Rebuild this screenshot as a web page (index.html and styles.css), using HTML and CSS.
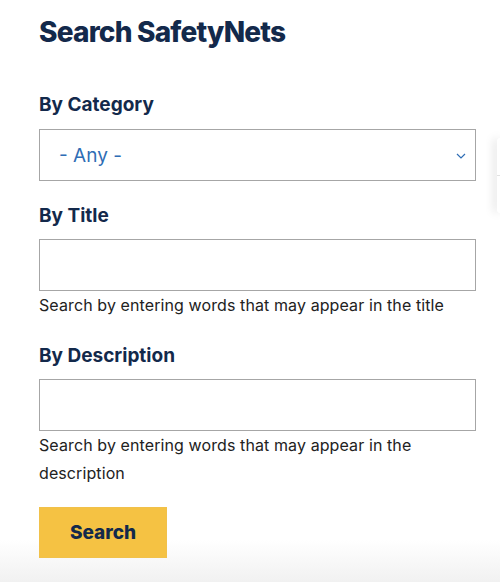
FILE: index.html
```html
<!DOCTYPE html>
<html lang="en">
<head>
<meta charset="utf-8">
<title>Search SafetyNets</title>
<link rel="stylesheet" href="styles.css">
</head>
<body>
<main class="page">
  <h1 class="title">Search SafetyNets</h1>
  <form class="search-form">
    <div class="field field-category">
      <label class="label" for="cat">By Category</label>
      <div class="select">
        <span class="select-value">- Any -</span>
        <svg class="chevron" width="10" height="6" viewBox="0 0 10 6"><path d="M1 1 L5 5 L9 1" fill="none" stroke="#2f6db5" stroke-width="1.2"/></svg>
      </div>
    </div>
    <div class="field field-title">
      <label class="label" for="title">By Title</label>
      <input class="input" id="title" type="text">
      <p class="help">Search by entering words that may appear in the title</p>
    </div>
    <div class="field field-desc">
      <label class="label" for="desc">By Description</label>
      <input class="input" id="desc" type="text">
      <p class="help help-wrap">Search by entering words that may appear in the description</p>
    </div>
    <button class="btn" type="button">Search</button>
  </form>
  <div class="popup"><div class="popup-top"></div><div class="popup-bottom"></div></div>
</main>
</body>
</html>
```

FILE: styles.css
```css
html, body {
  margin: 0;
  padding: 0;
}
body {
  min-height: 582px;
  background: linear-gradient(to bottom, #ffffff 0px, #ffffff 540px, #f1f1f1 582px);
  font-family: "Inter", "Liberation Sans", sans-serif;
  overflow: hidden;
}
.page {
  padding: 15px 0 0 39px;
  position: relative;
  min-height: 567px;
}
.title {
  margin: 0;
  font-size: 28px;
  line-height: 34px;
  font-weight: 800;
  letter-spacing: -0.8px;
  color: #13294b;
}
.search-form {
  display: flex;
  flex-direction: column;
  width: 437px;
}
.field {
  display: flex;
  flex-direction: column;
}
.field-category { margin-top: 44px; }
.field-title { margin-top: 23px; }
.field-desc { margin-top: 25px; }
.label {
  font-size: 19px;
  line-height: 24px;
  font-weight: 700;
  color: #13294b;
  margin-bottom: 12px;
}
.field-title .label, .field-desc .label { margin-bottom: 11px; }
.select {
  box-sizing: border-box;
  height: 52px;
  border: 1px solid #a6a6a6;
  display: flex;
  align-items: center;
  justify-content: space-between;
  padding: 0 9px 0 19px;
  background: #fff;
}
.select-value {
  font-size: 19px;
  color: #2f6db5;
}
.chevron { margin-top: 2px; }
.input {
  box-sizing: border-box;
  height: 52px;
  width: 100%;
  border: 1px solid #a6a6a6;
  margin: 0;
  background: #fff;
  font: inherit;
}
.help {
  margin: 0;
  font-size: 16px;
  line-height: 28px;
  letter-spacing: 0.1px;
  color: #222;
}
.help-wrap { max-width: 400px; }
.btn {
  margin-top: 20px;
  align-self: flex-start;
  width: 128px;
  height: 51px;
  border: 1px solid #f1c14a;
  background: #f5c243;
  color: #13294b;
  font-family: "Inter", "Liberation Sans", sans-serif;
  font-weight: 800;
  font-size: 19px;
  padding: 0;
}
.popup {
  position: absolute;
  left: 497px;
  top: 138px;
  width: 3px;
  height: 75px;
  background: #fff;
  border-radius: 6px 0 0 6px;
  box-shadow: -2px 0 10px rgba(0,0,0,0.22);
  display: flex;
  flex-direction: column;
}
.popup-top { height: 37px; border-bottom: 1px solid #e2e2e2; }
```
